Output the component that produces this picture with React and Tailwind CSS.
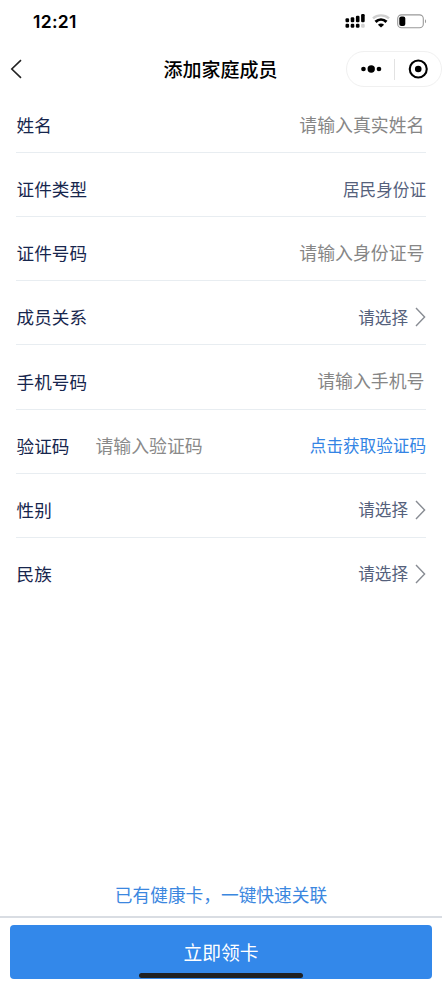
const fields = [
  { label: '姓名', placeholder: '请输入真实姓名' },
  { label: '证件类型', value: '居民身份证' },
  { label: '证件号码', placeholder: '请输入身份证号' },
  { label: '成员关系', value: '请选择', picker: true },
  { label: '手机号码', placeholder: '请输入手机号' },
  { label: '验证码', code: '请输入验证码', action: '点击获取验证码' },
  { label: '性别', value: '请选择', picker: true },
  { label: '民族', value: '请选择', picker: true },
];

function SignalIcon() {
  return (
    <svg width="20" height="14" viewBox="0 0 20 14" fill="#000">
      <rect x="0.5" y="4.2" width="3.6" height="4" rx="1.2" />
      <rect x="5.7" y="3.2" width="3.6" height="5" rx="1.2" />
      <rect x="10.9" y="1.8" width="3.6" height="6.4" rx="1.2" />
      <rect x="16.1" y="0" width="3.6" height="8.2" rx="1.2" />
      <rect x="0.5" y="9.8" width="3.6" height="4" rx="1.2" />
      <rect x="5.7" y="9.8" width="3.6" height="4" rx="1.2" />
      <rect x="10.9" y="9.8" width="3.6" height="4" rx="1.2" />
      <rect x="16.1" y="9.8" width="3.6" height="4" rx="1.2" fill="#d0d0d0" />
    </svg>
  );
}

function WifiIcon() {
  return (
    <svg width="18" height="14" viewBox="0 0 18 14" fill="none">
      <path d="M1 4.4C5.5 .4 12.5 .4 17 4.4" stroke="#cfcfcf" strokeWidth="2.4" />
      <path d="M3.5 7.9C6.8 4.8 11.2 4.8 14.5 7.9" stroke="#000" strokeWidth="2.9" />
      <path d="M9 13.6 5.9 10.7C7.7 9.1 10.3 9.1 12.1 10.7Z" fill="#000" />
    </svg>
  );
}

function BatteryIcon() {
  return (
    <svg width="30" height="15" viewBox="0 0 30 15" fill="none">
      <rect x="0.7" y="0.9" width="25.6" height="12.8" rx="3.8" stroke="#999" strokeWidth="1.1" />
      <rect x="2.3" y="2.5" width="6" height="9.6" rx="2" fill="#000" />
      <path d="M28 5.3c1.4.6 1.4 3.4 0 4Z" fill="#999" />
    </svg>
  );
}

function StatusBar() {
  return (
    <div className="flex h-[42px] items-center justify-between pl-[33px] pr-[15px]">
      <span className="pt-px font-['Inter'] text-[17.5px] font-semibold leading-none tracking-[0.3px] text-black">12:21</span>
      <div className="flex items-center gap-[7px]">
        <SignalIcon />
        <WifiIcon />
        <BatteryIcon />
      </div>
    </div>
  );
}

function NavBar() {
  return (
    <header className="grid h-[54px] grid-cols-[1fr_auto_1fr] items-center">
      <svg className="ml-[10px]" width="13" height="20" viewBox="0 0 13 20" fill="none" stroke="#222" strokeWidth="1.6">
        <path d="M11 1.2 1.8 10 11 18.8" />
      </svg>
      <h1 className="pb-px pr-px text-[19px] font-medium leading-none text-black">添加家庭成员</h1>
      <div className="flex h-9 w-24 items-center justify-self-end rounded-full border border-[#f0f0f0]">
        <svg className="flex-1" width="48" height="24" viewBox="0 0 48 24" fill="#000">
          <circle cx="17" cy="12" r="2.4" />
          <circle cx="25" cy="12" r="3.8" />
          <circle cx="33" cy="12" r="2.4" />
        </svg>
        <span className="h-[21px] w-px bg-[#e2e2e2]" />
        <svg className="flex-1" width="46" height="24" viewBox="0 0 46 24" fill="none">
          <circle cx="23" cy="12" r="8.5" stroke="#000" strokeWidth="2.1" />
          <circle cx="23" cy="12" r="3.3" fill="#000" />
        </svg>
      </div>
    </header>
  );
}

function FieldRow({ field, last }) {
  return (
    <div className={`flex h-[64.15px] items-center border-b pt-[8.6px] ${last ? 'border-transparent' : 'border-[#e8edf1]'}`}>
      <span className="pl-[0.6px] text-[17.6px] text-[#17264d]">{field.label}</span>
      {field.code && <span className="ml-[26px] text-[17.9px] text-[#8a8a8a]">{field.code}</span>}
      <div className="ml-auto flex items-center">
        {field.placeholder && <span className="pr-[1.5px] text-[17.9px] text-[#868686]">{field.placeholder}</span>}
        {field.value && <span className="text-[16.6px] text-[#55617c]">{field.value}</span>}
        {field.action && <span className="text-[16.6px] text-[#3384e4]">{field.action}</span>}
        {field.picker && (
          <svg className="ml-[7px]" width="11" height="20" viewBox="0 0 11 20" fill="none" stroke="#888c93" strokeWidth="1.4">
            <path d="M1 1 9.6 10 1 19" />
          </svg>
        )}
      </div>
    </div>
  );
}

export default function App() {
  return (
    <div className="flex h-[988px] w-[442px] flex-col overflow-hidden bg-white font-['Noto_Sans_CJK_SC',sans-serif] leading-none">
      <StatusBar />
      <NavBar />
      <main className="-mt-[7.1px] flex-1 px-4">
        {fields.map((field, i) => (
          <FieldRow key={field.label} field={field} last={i === fields.length - 1} />
        ))}
      </main>
      <div className="flex h-[30px] items-start justify-center text-[17.7px] text-[#3b87df]">
        已有健康卡，一键快速关联
      </div>
      <footer className="relative h-[72px] border-t-2 border-[#d9dde3] px-[10.4px] pt-[7px]">
        <button className="flex h-[54px] w-full items-center justify-center rounded-[4px] bg-[#3388ea] text-[18.8px] text-white">
          立即领卡
        </button>
        {/* home indicator sits over the button */}
        <span className="absolute left-[139px] top-[54.5px] h-[5.5px] w-[164px] rounded-full bg-[#1f2124]" />
      </footer>
    </div>
  );
}
